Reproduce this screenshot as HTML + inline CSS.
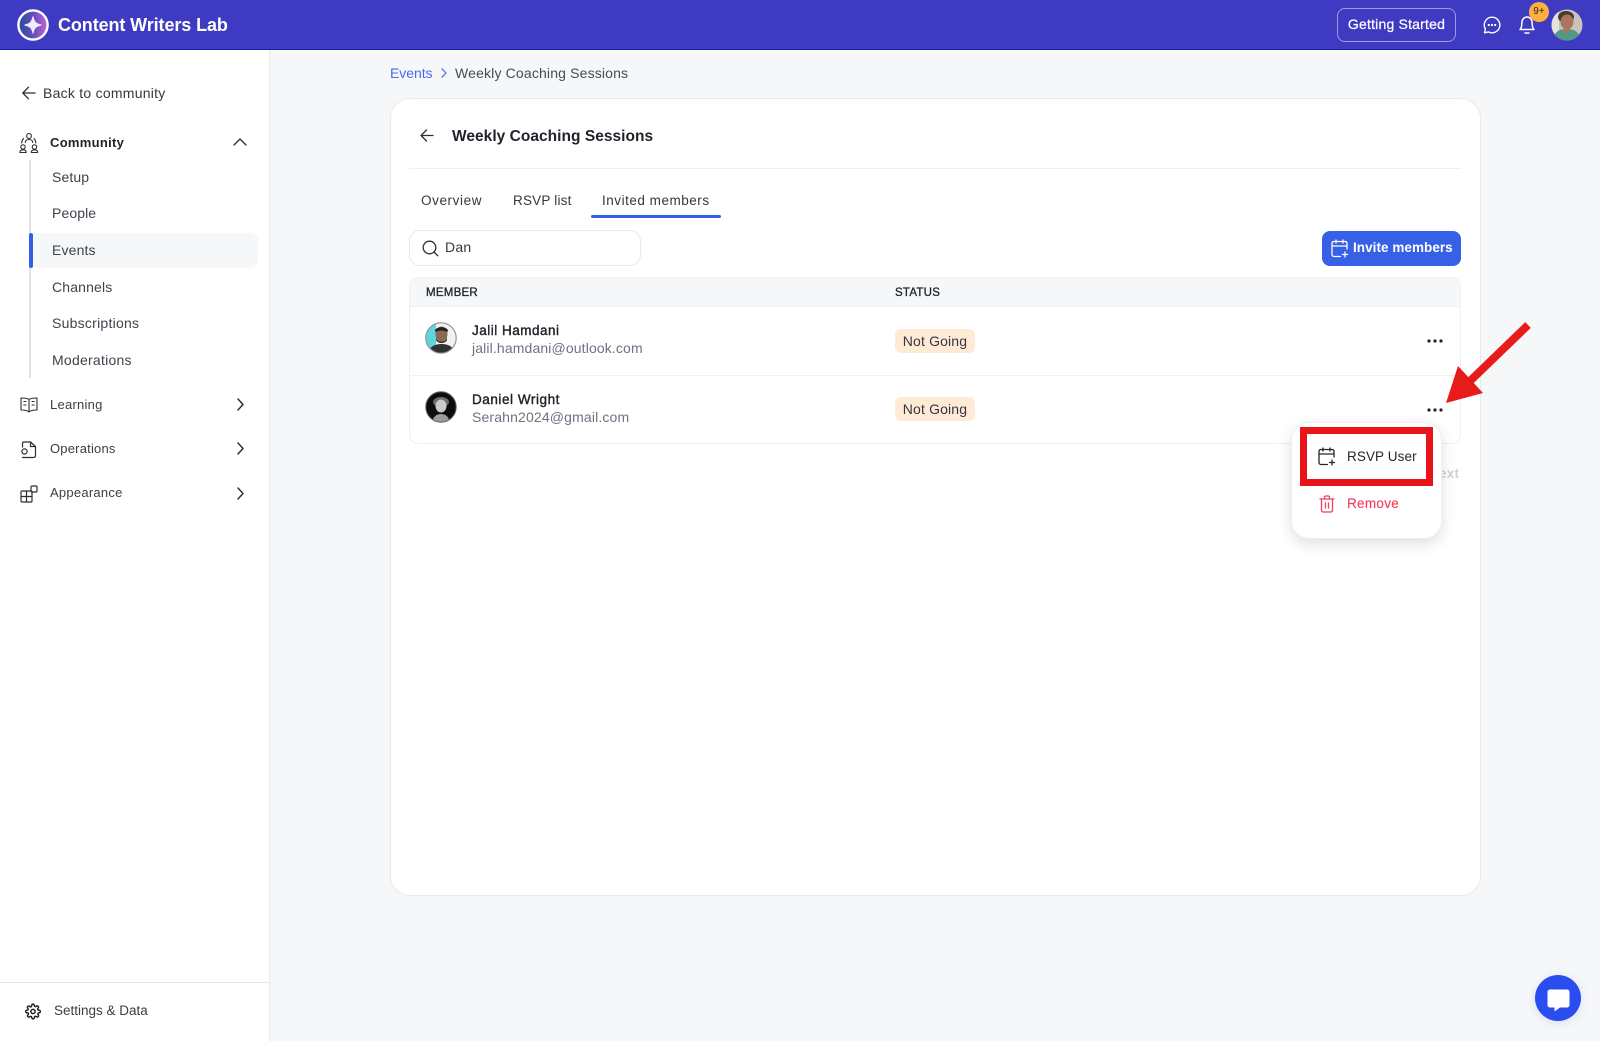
<!DOCTYPE html>
<html><head><meta charset="utf-8"><title>Weekly Coaching Sessions</title>
<style>
*{box-sizing:border-box}
html,body{margin:0;padding:0}
body{width:1600px;height:1041px;position:relative;overflow:hidden;background:#f6f7f9;font-family:"Liberation Sans",sans-serif;color:#2b2f38}
.a{position:absolute}
.t{position:absolute;white-space:nowrap;line-height:20px;font-size:14px;letter-spacing:.25px}
.b{font-weight:700}
svg{position:absolute;overflow:visible;fill:none;stroke-linecap:round;stroke-linejoin:round}
.dots circle{fill:#1f2329}
</style></head><body>

<!-- Top bar -->
<div class="a" style="left:0;top:0;width:1600px;height:50px;background:#3e3bc2;border-bottom:1px solid #1f1ca8"></div>
<svg style="left:17px;top:9px" width="32" height="32" viewBox="0 0 32 32">
<defs><linearGradient id="lg" x1="0" y1="0" x2="1" y2="0"><stop offset="0" stop-color="#254a9c"/><stop offset=".55" stop-color="#6a4fc0"/><stop offset="1" stop-color="#c764d8"/></linearGradient></defs>
<circle cx="16" cy="16" r="14.6" fill="url(#lg)" stroke="#fff" stroke-width="2.4"/>
<path d="M16 8C17 13 19 15 24 16C19 17 17 19 16 24C15 19 13 17 8 16C13 15 15 13 16 8Z" fill="#eeeaff" stroke="#eeeaff" stroke-width="1.200"/></svg>
<div class="t b" style="left:58px;top:15px;color:#fff;font-size:18px;letter-spacing:-.1px">Content Writers Lab</div>

<div class="a" style="left:1337px;top:8px;width:119px;height:34px;border:1px solid #9d9ce0;border-radius:8px"></div>
<div class="t" style="left:1337px;top:14px;width:119px;text-align:center;color:#fff;font-size:14px;letter-spacing:.2px;-webkit-text-stroke:.25px #fff">Getting Started</div>
<svg style="left:1483px;top:16px" width="18" height="18" viewBox="0 0 18 18" stroke="#fff" stroke-width="1.4"><path d="M9 1.200A7.800 7.800 0 1 1 5.400 15.900L1.500 16.800L2.400 13A7.800 7.800 0 0 1 9 1.200Z"/><circle cx="5.800" cy="9" r=".45" style="fill:#fff"/><circle cx="9" cy="9" r=".45" style="fill:#fff"/><circle cx="12.200" cy="9" r=".45" style="fill:#fff"/></svg>
<svg style="left:1519px;top:15px" width="16" height="20" viewBox="0 0 16 20" stroke="#fff" stroke-width="1.5"><path d="M1 14.500C2.500 13 2.800 11.500 2.800 8.500C2.800 4.500 5 2 8 2C11 2 13.200 4.500 13.200 8.500C13.200 11.500 13.500 13 15 14.500Z"/><path d="M6 18H10"/></svg>
<div class="a" style="left:1529px;top:2px;width:20px;height:20px;border-radius:50%;background:#fdb03c;color:#2b2430;font-size:10px;line-height:20px;text-align:center">9+</div>
<svg style="left:1551px;top:9px" width="32" height="32" viewBox="0 0 32 32"><defs><clipPath id="c1"><circle cx="16" cy="16" r="15.500"/></clipPath></defs><g clip-path="url(#c1)"><rect width="32" height="32" fill="#c9c3bd"/><rect x="0" y="0" width="8" height="32" fill="#e6e2dc"/><ellipse cx="15" cy="8" rx="8" ry="6" fill="#4b3a33"/><ellipse cx="16" cy="13" rx="6.500" ry="7.500" fill="#a9775f"/><path d="M2 32C3 22 9 20 15 20C22 20 29 22 30 32Z" fill="#4f9a85"/><path d="M12 20L16 26L19 20Z" fill="#a9775f"/></g></svg>

<!-- Sidebar -->
<div class="a" style="left:0;top:50px;width:270px;height:991px;background:#fff;border-right:1px solid #e9eaed"></div>
<svg style="left:22px;top:86px" width="14" height="14" viewBox="0 0 14 14" stroke="#2b2f38" stroke-width="1.300"><path d="M13 7H1M6.500 1.200L.8 7L6.500 12.800"/></svg>
<div class="t" style="left:43px;top:83px;color:#333842">Back to community</div>

<svg style="left:19px;top:132px" width="20" height="22" viewBox="0 0 20 22" stroke="#2b2f38" stroke-width="1.100"><circle cx="10" cy="4" r="2.400"/><path d="M6.300 10.500C6.300 8.500 8 7.500 10 7.500C12 7.500 13.700 8.500 13.700 10.500"/><circle cx="4" cy="15" r="2.200"/><path d="M.8 20.500C.8 18.700 2.200 17.800 4 17.800C5.800 17.800 7.200 18.700 7.200 20.500Z"/><circle cx="15.500" cy="15" r="2.200"/><path d="M12.300 20.500C12.300 18.700 13.700 17.800 15.500 17.800C17.300 17.800 18.700 18.700 18.700 20.500Z"/><path d="M4.500 6.500C3.200 8 2.700 9.500 2.700 11M15 6.500C16.300 8 16.800 9.500 16.800 11"/></svg>
<div class="t b" style="left:50px;top:133px;font-size:13px;color:#1f2329;letter-spacing:.3px">Community</div>
<svg style="left:233px;top:138px" width="14" height="8" viewBox="0 0 14 8" stroke="#2b2f38" stroke-width="1.400"><path d="M1 7L7 1L13 7"/></svg>

<div class="a" style="left:29px;top:160px;width:2px;height:218px;background:#e1e2e5"></div>
<div class="a" style="left:30px;top:233px;width:228px;height:35px;background:#f6f7f9;border-radius:8px"></div>
<div class="a" style="left:29px;top:233px;width:4px;height:35px;background:#3260e8;border-radius:2px"></div>
<div class="t" style="left:52px;top:167px;color:#3f434c;letter-spacing:.1px">Setup</div>
<div class="t" style="left:52px;top:203px;color:#3f434c;letter-spacing:.1px">People</div>
<div class="t" style="left:52px;top:240px;color:#3f434c;letter-spacing:.15px">Events</div>
<div class="t" style="left:52px;top:277px;color:#3f434c;letter-spacing:.15px">Channels</div>
<div class="t" style="left:52px;top:313px;color:#3f434c">Subscriptions</div>
<div class="t" style="left:52px;top:350px;color:#3f434c">Moderations</div>

<svg style="left:20px;top:397px" width="18" height="16" viewBox="0 0 18 16" stroke="#2b2f38" stroke-width="1.100"><path d="M9 2.500C7.500 1.300 5 1 1 1V13C5 13 7.500 13.300 9 15C10.500 13.300 13 13 17 13V1C13 1 10.500 1.300 9 2.500ZM9 2.500V15"/><path d="M3.800 4.500H6M3.800 8H6M12 4.500H14.200M12 8H14.200"/></svg>
<div class="t" style="left:50px;top:395px;color:#3a3e47;font-size:13px">Learning</div>
<svg style="left:237px;top:398px" width="7" height="13" viewBox="0 0 7 13" stroke="#2b2f38" stroke-width="1.500"><path d="M1 1L6 6.500L1 12"/></svg>

<svg style="left:20px;top:440px" width="17" height="19" viewBox="0 0 17 19" stroke="#2b2f38" stroke-width="1.200"><path d="M2.500 7V3.500C2.500 2.500 3 2 4 2H10.500L15.500 6.500V15.500C15.500 16.800 14.800 17.500 13.500 17.500H2.500"/><path d="M10.500 2V6.500H15.500"/><circle cx="4.500" cy="11.500" r="2.600"/></svg>
<div class="t" style="left:50px;top:439px;color:#3a3e47;font-size:13px;letter-spacing:.2px">Operations</div>
<svg style="left:237px;top:442px" width="7" height="13" viewBox="0 0 7 13" stroke="#2b2f38" stroke-width="1.500"><path d="M1 1L6 6.500L1 12"/></svg>

<svg style="left:20px;top:485px" width="18" height="18" viewBox="0 0 18 18" stroke="#2b2f38" stroke-width="1.200"><rect x="1" y="6" width="11" height="11" rx="1"/><path d="M6.500 6V17M1 11.500H12"/><rect x="11" y="1" width="6" height="6" rx="1"/></svg>
<div class="t" style="left:50px;top:483px;color:#3a3e47;font-size:13px">Appearance</div>
<svg style="left:237px;top:487px" width="7" height="13" viewBox="0 0 7 13" stroke="#2b2f38" stroke-width="1.500"><path d="M1 1L6 6.500L1 12"/></svg>

<div class="a" style="left:0;top:982px;width:269px;height:1px;background:#e5e6e9"></div>
<svg style="left:25px;top:1003px" width="16" height="17" viewBox="0 0 24 24" stroke="#1f2329" stroke-width="2.200"><circle cx="12" cy="12" r="3.200"/><path d="M19.400 15a1.650 1.650 0 0 0 .33 1.820l.06.06a2 2 0 1 1-2.830 2.830l-.06-.06a1.650 1.650 0 0 0-2.800 1.170V21a2 2 0 1 1-4 0v-.09a1.650 1.650 0 0 0-2.820-1.120l-.06.06a2 2 0 1 1-2.830-2.830l.06-.06A1.650 1.650 0 0 0 3.090 14H3a2 2 0 1 1 0-4h.09a1.650 1.650 0 0 0 1.120-2.820l-.06-.06a2 2 0 1 1 2.830-2.830l.06.06A1.650 1.650 0 0 0 10 3.090V3a2 2 0 1 1 4 0v.09a1.650 1.650 0 0 0 2.820 1.120l.06-.06a2 2 0 1 1 2.830 2.830l-.06.06A1.650 1.650 0 0 0 20.910 10H21a2 2 0 1 1 0 4h-.09a1.650 1.650 0 0 0-1.510 1z"/></svg>
<div class="t" style="left:54px;top:1001px;color:#3a3e47;font-size:13.500px;letter-spacing:0">Settings &amp; Data</div>

<!-- Breadcrumb -->
<div class="t" style="left:390px;top:63px;color:#4a6ae8;letter-spacing:-.05px">Events</div>
<svg style="left:441px;top:68px" width="6" height="10" viewBox="0 0 6 10" stroke="#4a6ae8" stroke-width="1.200"><path d="M1 .8L5 5L1 9.200"/></svg>
<div class="t" style="left:455px;top:63px;color:#474b54;letter-spacing:.16px">Weekly Coaching Sessions</div>

<!-- Card -->
<div class="a" style="left:390px;top:98px;width:1091px;height:798px;background:#fff;border:1px solid #e8e9ec;border-radius:20px"></div>
<svg style="left:420px;top:129px" width="14" height="13" viewBox="0 0 14 13" stroke="#2b2f38" stroke-width="1.300"><path d="M13 6.500H1M6.500 1L1 6.500L6.500 12"/></svg>
<div class="t b" style="left:452px;top:127px;font-size:15.500px;color:#1f2329;letter-spacing:.03px">Weekly Coaching Sessions</div>
<div class="a" style="left:409px;top:168px;width:1052px;height:1px;background:#eff0f2"></div>

<div class="t" style="left:421px;top:191px;color:#33373f;font-size:13.500px;letter-spacing:.6px">Overview</div>
<div class="t" style="left:513px;top:191px;color:#33373f;font-size:13.500px;letter-spacing:.2px">RSVP list</div>
<div class="t" style="left:602px;top:191px;color:#33373f;font-size:13.500px;letter-spacing:.52px">Invited members</div>
<div class="a" style="left:591px;top:215px;width:130px;height:3px;background:#3260e8;border-radius:2px"></div>

<div class="a" style="left:409px;top:230px;width:232px;height:36px;border:1px solid #e8e9ec;border-radius:11px"></div>
<svg style="left:422px;top:240px" width="17" height="17" viewBox="0 0 17 17" stroke="#2b2f38" stroke-width="1.300"><circle cx="7.500" cy="7.500" r="6.300"/><path d="M12.200 12.200L15.800 15.800"/></svg>
<div class="t" style="left:445px;top:237px;color:#33373f;font-size:14px">Dan</div>

<div class="a" style="left:1322px;top:231px;width:139px;height:35px;background:#3660e6;border-radius:8px"></div>
<svg style="left:1331px;top:239px" width="18" height="19" viewBox="0 0 18 19" stroke="#fff" stroke-width="1.300"><path d="M9.500 17.500H3C1.800 17.500 1 16.700 1 15.500V4.500C1 3.300 1.800 2.500 3 2.500H14C15.200 2.500 16 3.300 16 4.500V10M1 7H16M5 1V4M12 1V4M14 13V18M11.500 15.500H16.500"/></svg>
<div class="t b" style="left:1353px;top:238px;color:#fff;font-size:13.500px;letter-spacing:.05px">Invite members</div>

<!-- Table -->
<div class="a" style="left:409px;top:277px;width:1052px;height:167px;background:#fff;border:1px solid #eff0f2;border-radius:9px;overflow:hidden">
 <div class="a" style="left:0;top:0;width:1052px;height:29px;background:#f6f7f9;border-bottom:1px solid #eff0f2"></div>
 <div class="a" style="left:0;top:97px;width:1052px;height:1px;background:#f0f1f3"></div>
</div>
<div class="t" style="left:426px;top:283px;font-size:11.500px;color:#1f2329;-webkit-text-stroke:.3px #1f2329">MEMBER</div>
<div class="t" style="left:895px;top:283px;font-size:11.500px;color:#1f2329;-webkit-text-stroke:.3px #1f2329">STATUS</div>

<svg style="left:425px;top:322px" width="32" height="32" viewBox="0 0 32 32"><defs><clipPath id="c2"><circle cx="16" cy="16" r="15"/></clipPath></defs><g clip-path="url(#c2)"><rect width="32" height="32" fill="#f1f1f1"/><path d="M0 0H11V32H0Z" fill="#62d5dc"/><ellipse cx="16.500" cy="12" rx="6" ry="7.500" fill="#8a6a55"/><path d="M10 9C10 4 23 4 23 9L22 10C18 8 14 8 11 10Z" fill="#26201c"/><path d="M11 15C12 21 21 21 22 15L22 18C20 22 13 22 11 18Z" fill="#33291f"/><path d="M3 32C4 24 11 22 16.500 22C22 22 29 24 30 32Z" fill="#2f3133"/></g><circle cx="16" cy="16" r="15.200" stroke="#8d93a0" stroke-width="1.200"/></svg>
<div class="t" style="left:472px;top:321px;font-size:13.500px;color:#1f2329;letter-spacing:.5px;-webkit-text-stroke:.4px #1f2329">Jalil Hamdani</div>
<div class="t" style="left:472px;top:338px;font-size:14px;color:#6b7280;letter-spacing:.13px">jalil.hamdani@outlook.com</div>
<div class="a" style="left:895px;top:329px;width:80px;height:24px;background:#ffead6;border-radius:6px;font-size:14px;line-height:24px;text-align:center;color:#33373f;letter-spacing:.15px">Not Going</div>
<svg class="dots" style="left:1427px;top:339px" width="16" height="4" viewBox="0 0 16 4"><circle cx="2" cy="2" r="1.600"/><circle cx="8" cy="2" r="1.600"/><circle cx="14" cy="2" r="1.600"/></svg>

<svg style="left:425px;top:391px" width="32" height="32" viewBox="0 0 32 32"><defs><clipPath id="c3"><circle cx="16" cy="16" r="15"/></clipPath></defs><g clip-path="url(#c3)"><rect width="32" height="32" fill="#0d0d0d"/><ellipse cx="16" cy="11" rx="8" ry="5" fill="#6d6d6d"/><ellipse cx="16" cy="15" rx="5.500" ry="6.500" fill="#c9c9c9"/><path d="M7 32C8 25 12 23 16 23C20 23 24 25 25 32Z" fill="#9a9a9a"/></g><circle cx="16" cy="16" r="15.200" stroke="#5e6470" stroke-width="1"/></svg>
<div class="t" style="left:472px;top:390px;font-size:13.500px;color:#1f2329;letter-spacing:.55px;-webkit-text-stroke:.4px #1f2329">Daniel Wright</div>
<div class="t" style="left:472px;top:407px;font-size:14px;color:#6b7280;letter-spacing:.15px">Serahn2024@gmail.com</div>
<div class="a" style="left:895px;top:397px;width:80px;height:24px;background:#ffead6;border-radius:6px;font-size:14px;line-height:24px;text-align:center;color:#33373f;letter-spacing:.15px">Not Going</div>
<svg class="dots" style="left:1427px;top:408px" width="16" height="4" viewBox="0 0 16 4"><circle cx="2" cy="2" r="1.600"/><circle cx="8" cy="2" r="1.600"/><circle cx="14" cy="2" r="1.600"/></svg>

<div class="t b" style="left:1429px;top:464px;width:30px;text-align:right;color:#cfd1d5;font-size:13.500px">Next</div>

<!-- Popup -->
<div class="a" style="left:1291px;top:422px;width:151px;height:117px;background:#fff;border:1px solid #eff0f2;border-radius:18px;box-shadow:0 5px 14px rgba(30,35,50,.14)"></div>
<svg style="left:1318px;top:447px" width="18" height="19" viewBox="0 0 18 19" stroke="#23262d" stroke-width="1.300"><path d="M9.500 17.500H3C1.800 17.500 1 16.700 1 15.500V4.500C1 3.300 1.800 2.500 3 2.500H14C15.200 2.500 16 3.300 16 4.500V10M1 7H16M5 1V4M12 1V4M14 13V18M11.500 15.500H16.500"/></svg>
<div class="t" style="left:1347px;top:447px;font-size:13.500px;color:#23262d;letter-spacing:.1px">RSVP User</div>
<div class="a" style="left:1300px;top:427px;width:133px;height:59px;border:7px solid #e8141a"></div>
<svg style="left:1319px;top:495px" width="16" height="18" viewBox="0 0 16 18" stroke="#f43f5e" stroke-width="1.300"><path d="M1 4H15M5.500 4V2.200C5.500 1.500 6 1 6.700 1H9.300C10 1 10.500 1.500 10.500 2.200V4M2.500 4V15C2.500 16.200 3.300 17 4.500 17H11.500C12.700 17 13.500 16.200 13.500 15V4M6.500 8V13M9.500 8V13"/></svg>
<div class="t" style="left:1347px;top:494px;font-size:13.500px;color:#f43f5e;letter-spacing:.3px;-webkit-text-stroke:.15px #f43f5e">Remove</div>

<!-- Red arrow -->
<svg style="left:0;top:0" width="1600" height="1041" viewBox="0 0 1600 1041"><path d="M1528 325L1469 382" stroke="#e81b1b" stroke-width="8" stroke-linecap="butt"/><path d="M1446 403L1458 366L1483 393Z" style="fill:#e81b1b"/></svg>

<!-- Chat bubble -->
<div class="a" style="left:1535px;top:975px;width:46px;height:46px;border-radius:50%;background:#2a4df0;box-shadow:0 2px 10px rgba(40,60,200,.12)"></div>
<svg style="left:1547px;top:989px" width="23" height="23" viewBox="0 0 23 23"><path d="M3 .5H20C21.400 .5 22.500 1.600 22.500 3V16C22.500 17.400 21.400 18.500 20 18.500H13L7.500 22.500V18.500H3C1.600 18.500 .5 17.400 .5 16V3C.5 1.600 1.600 .5 3 .5Z" style="fill:#fff"/></svg>
</body></html>
